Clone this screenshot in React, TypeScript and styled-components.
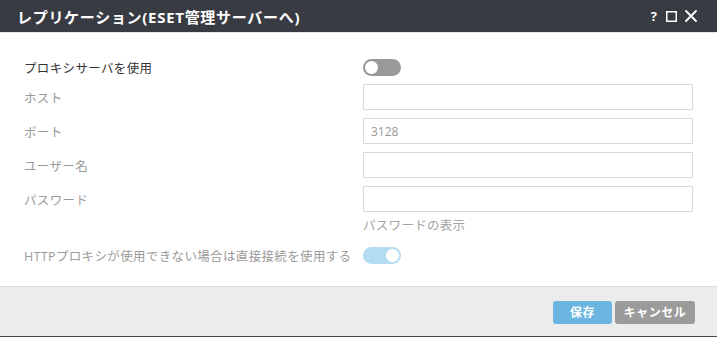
import React from "react";
import styled, { createGlobalStyle } from "styled-components";

const FONT = `"Open Sans", "Noto Sans CJK JP", sans-serif`;

const GlobalStyle = createGlobalStyle`
  html, body {
    margin: 0;
    padding: 0;
    background: #ffffff;
  }
  body {
    font-family: ${FONT};
  }
`;

const Dialog = styled.div`
  width: 717px;
  height: 337px;
  display: flex;
  flex-direction: column;
  background: #ffffff;
  border-bottom: 1px solid #4a4a4a;
  box-sizing: border-box;
`;

const Header = styled.div`
  height: 32px;
  background: #383c42;
  border-bottom: 1px solid #e6e6e6;
  display: flex;
  align-items: center;
  justify-content: space-between;
  padding: 0 20px 0 17px;
  flex-shrink: 0;
`;

const Title = styled.h1`
  margin: 0;
  color: #ffffff;
  font-size: 15px;
  font-weight: 700;
  letter-spacing: 0.7px;
  font-family: ${FONT};
`;

const HeaderIcons = styled.div`
  display: flex;
  align-items: center;
  gap: 8px;
  color: #ffffff;
`;

const HelpMark = styled.span`
  font-size: 13px;
  font-weight: 700;
  font-family: "Open Sans", sans-serif;
  line-height: 1;
  margin-right: 1px;
`;

const Body = styled.div`
  flex: 1;
  padding: 23px 24px 0 24px;
`;

const Form = styled.div`
  display: grid;
  grid-template-columns: 339px 330px;
  align-items: center;
`;

const Label = styled.div<{ $strong?: boolean; $top?: number }>`
  font-size: 12.5px;
  color: ${(p) => (p.$strong ? "#333333" : "#9a9a9a")};
  margin-top: ${(p) => p.$top ?? 0}px;
  letter-spacing: 0.35px;
  white-space: nowrap;
`;

const Cell = styled.div<{ $top?: number; $height?: number }>`
  margin-top: ${(p) => p.$top ?? 0}px;
  height: ${(p) => p.$height ?? 26}px;
  display: flex;
  align-items: center;
`;

const TextInput = styled.div`
  width: 330px;
  height: 26px;
  box-sizing: border-box;
  border: 1px solid #d9d9d9;
  display: flex;
  align-items: center;
  padding: 0 7px;
  font-size: 12px;
  color: #999999;
`;

const Hint = styled.div`
  font-size: 12.5px;
  color: #a3a3a3;
  letter-spacing: 0.3px;
`;

const Toggle = styled.div<{ $on?: boolean }>`
  width: 38px;
  height: 17px;
  border-radius: 9px;
  background: ${(p) => (p.$on ? "#b3dcf1" : "#999999")};
  position: relative;
  box-sizing: border-box;
  margin-top: 1px;

  &::after {
    content: "";
    position: absolute;
    top: 1px;
    left: ${(p) => (p.$on ? "22px" : "1px")};
    width: 15px;
    height: 15px;
    border-radius: 50%;
    background: #ffffff;
    box-sizing: border-box;
    border: 1px solid ${(p) => (p.$on ? "#b3dcf1" : "#8c8c8c")};
  }
`;

const Footer = styled.div`
  height: 49px;
  background: #ececec;
  border-top: 1px solid #dedede;
  display: flex;
  align-items: center;
  justify-content: flex-end;
  gap: 3px;
  padding: 0 22px 0 0;
  flex-shrink: 0;
`;

const Button = styled.button<{ $primary?: boolean }>`
  height: 23px;
  width: ${(p) => (p.$primary ? "59px" : "80px")};
  border: none;
  border-radius: 3px;
  background: ${(p) => (p.$primary ? "#6ab6e0" : "#9b9b9b")};
  color: #ffffff;
  font-family: ${FONT};
  font-size: 12px;
  font-weight: 700;
  letter-spacing: 0.5px;
  padding: 0;
  margin-top: 1px;
`;

export default function App() {
  return (
    <>
      <GlobalStyle />
      <Dialog>
        <Header>
          <Title>レプリケーション(ESET管理サーバーへ)</Title>
          <HeaderIcons>
            <HelpMark>?</HelpMark>
            <svg width="11" height="11" viewBox="0 0 11 11">
              <rect x="0.75" y="0.75" width="9.5" height="9.5" fill="none" stroke="#ffffff" strokeWidth="1.5" />
            </svg>
            <svg width="12" height="12" viewBox="0 0 12 12">
              <path d="M1 1 L11 11 M11 1 L1 11" stroke="#ffffff" strokeWidth="1.8" strokeLinecap="round" />
            </svg>
          </HeaderIcons>
        </Header>
        <Body>
          <Form>
            <Label $strong>プロキシサーバを使用</Label>
            <Cell $height={22}>
              <Toggle />
            </Cell>

            <Label $top={6}>ホスト</Label>
            <Cell $top={6}>
              <TextInput />
            </Cell>

            <Label $top={8}>ポート</Label>
            <Cell $top={8}>
              <TextInput>3128</TextInput>
            </Cell>

            <Label $top={8}>ユーザー名</Label>
            <Cell $top={8}>
              <TextInput />
            </Cell>

            <Label $top={8}>パスワード</Label>
            <Cell $top={8}>
              <TextInput />
            </Cell>

            <div />
            <Cell $top={2} $height={20}>
              <Hint>パスワードの表示</Hint>
            </Cell>

            <Label $top={8}>HTTPプロキシが使用できない場合は直接接続を使用する</Label>
            <Cell $top={8}>
              <Toggle $on />
            </Cell>
          </Form>
        </Body>
        <Footer>
          <Button $primary>保存</Button>
          <Button>キャンセル</Button>
        </Footer>
      </Dialog>
    </>
  );
}
